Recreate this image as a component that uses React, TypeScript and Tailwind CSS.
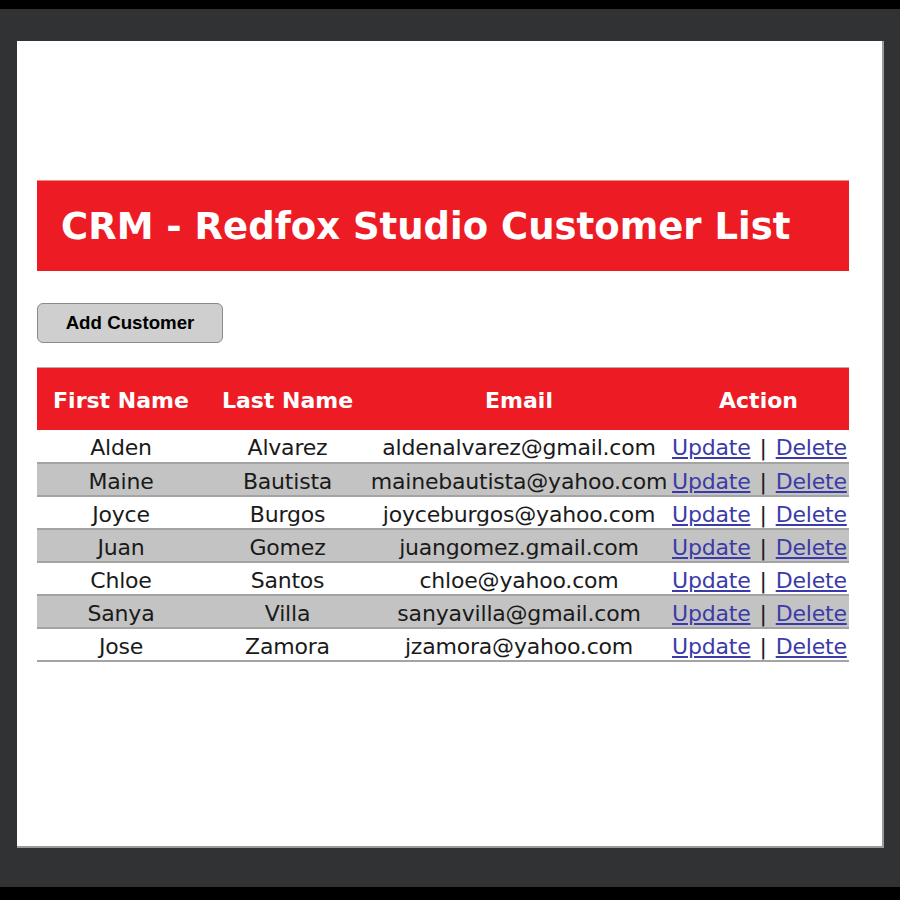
import React from "react";

const rows = [
  ["Alden", "Alvarez", "aldenalvarez@gmail.com"],
  ["Maine", "Bautista", "mainebautista@yahoo.com"],
  ["Joyce", "Burgos", "joyceburgos@yahoo.com"],
  ["Juan", "Gomez", "juangomez.gmail.com"],
  ["Chloe", "Santos", "chloe@yahoo.com"],
  ["Sanya", "Villa", "sanyavilla@gmail.com"],
  ["Jose", "Zamora", "jzamora@yahoo.com"],
];

export default function App() {
  return (
    <div className="w-[900px] h-[900px] bg-black flex flex-col">
      <div className="h-[9px]" />
      <div className="h-[878px] bg-[#313234] pt-[32px] pl-[17px]">
        <div className="w-[867px] h-[807px] bg-white border-b-2 border-r-2 border-[#9a9a9a] pt-[139px] pl-[20px]">
          <div className="w-[812px] h-[91px] bg-[#ed1c24] border-t border-[#f08a80] flex items-center pl-[24px]">
            <h1
              className="text-white font-bold text-[37px] pt-[2px]"
              style={{ fontFamily: '"DejaVu Sans", Verdana, sans-serif' }}
            >
              CRM - Redfox Studio Customer List
            </h1>
          </div>
          <button
            className="mt-[32px] w-[186px] h-[40px] bg-[#cfcfcf] border border-[#8a8a8a] rounded-[6px] text-black font-bold text-[18.7px]"
            style={{ fontFamily: '"Liberation Sans", Arial, sans-serif' }}
          >
            Add Customer
          </button>
          <table
            className="mt-[24px] w-[812px] border-collapse table-fixed"
            style={{ fontFamily: '"DejaVu Sans", Verdana, sans-serif' }}
          >
            <colgroup>
              <col className="w-[168px]" />
              <col className="w-[165px]" />
              <col className="w-[298px]" />
              <col className="w-[181px]" />
            </colgroup>
            <thead>
              <tr className="h-[62px] bg-[#ed1c24] border-t border-[#b0b0b0]">
                <th className="text-white font-bold text-[22px] pt-[4px]">First Name</th>
                <th className="text-white font-bold text-[22px] pt-[4px]">Last Name</th>
                <th className="text-white font-bold text-[22px] pt-[4px]">Email</th>
                <th className="text-white font-bold text-[22px] pt-[4px]">Action</th>
              </tr>
            </thead>
            <tbody>
              {rows.map((r, i) => (
                <tr
                  key={i}
                  className={
                    (i % 2 === 1 ? "bg-[#c3c3c3] " : "bg-white ") +
                    "h-[33px] border-b-2 border-[#a3a3a3]"
                  }
                >
                  <td className="text-center text-[22px] text-[#1a1a1a] tracking-[-0.2px] p-0 pt-[4px] leading-[27px]">{r[0]}</td>
                  <td className="text-center text-[22px] text-[#1a1a1a] tracking-[-0.2px] p-0 pt-[4px] leading-[27px]">{r[1]}</td>
                  <td className="text-center text-[22px] text-[#1a1a1a] tracking-[-0.2px] p-0 pt-[4px] leading-[27px] whitespace-nowrap">{r[2]}</td>
                  <td className="text-left text-[22px] text-[#1a1a1a] tracking-[-0.2px] p-0 pt-[4px] pl-[4px] leading-[27px] whitespace-nowrap">
                    <a className="text-[#3b3ba8] underline" href="#">Update</a>
                    <span className="mx-[9px]">|</span>
                    <a className="text-[#3b3ba8] underline" href="#">Delete</a>
                  </td>
                </tr>
              ))}
            </tbody>
          </table>
        </div>
      </div>
    </div>
  );
}
